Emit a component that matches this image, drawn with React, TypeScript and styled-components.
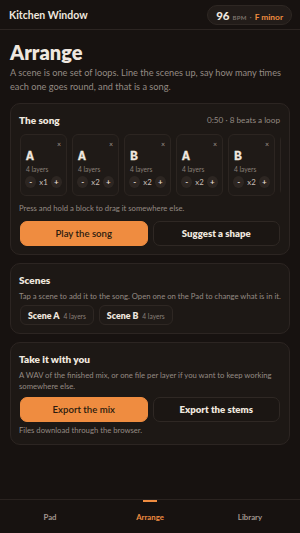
import React from 'react';
import styled, { createGlobalStyle } from 'styled-components';

const GlobalStyle = createGlobalStyle`
  html, body {
    margin: 0;
    padding: 0;
    background: #171210;
  }
  * { box-sizing: border-box; }
  body {
    font-family: Lato, "Noto Sans", sans-serif;
    color: #efe7df;
  }
`;

const Screen = styled.div`
  width: 300px;
  height: 533px;
  display: flex;
  flex-direction: column;
  background: #171210;
  overflow: hidden;
`;

const TopBar = styled.header`
  height: 30px;
  flex: none;
  display: flex;
  align-items: center;
  justify-content: space-between;
  padding: 0 8px 0 9px;
  border-bottom: 1px solid #2c2522;
`;

const AppName = styled.div`
  font-size: 10.5px;
  font-weight: 700;
`;

const TempoPill = styled.div`
  display: flex;
  align-items: baseline;
  gap: 3px;
  height: 20px;
  padding: 3px 8px 0 8px;
  border-radius: 10px;
  background: #221c19;
  border: 1px solid #2e2723;
`;

const Bpm = styled.span`
  font-size: 11.5px;
  font-weight: 900;
`;

const BpmUnit = styled.span`
  font-size: 6px;
  font-weight: 700;
  color: #7d736c;
  letter-spacing: 0.3px;
`;

const Dot = styled.span`
  font-size: 7px;
  color: #7d736c;
`;

const Key = styled.span`
  font-size: 8.4px;
  font-weight: 700;
  color: #ef8c40;
`;

const Body = styled.main`
  flex: 1;
  padding: 10px 10px 0 10px;
  display: flex;
  flex-direction: column;
`;

const Title = styled.h1`
  margin: 0;
  font-size: 20px;
  font-weight: 800;
  line-height: 24px;
`;

const Lead = styled.p`
  margin: 2px 0 10px 0;
  font-size: 9.2px;
  line-height: 13.5px;
  color: #948a83;
`;

const Card = styled.section`
  background: #1d1815;
  border: 1px solid #2c2522;
  border-radius: 10px;
  padding: 9px 8px 8px 8px;
  margin-bottom: 8px;
`;

const CardHead = styled.div`
  display: flex;
  align-items: center;
  justify-content: space-between;
  height: 14px;
  margin-bottom: 4px;
  padding-right: 1px;
`;

const CardTitle = styled.h2`
  margin: 0;
  font-size: 10px;
  font-weight: 800;
  line-height: 14px;
`;

const Meta = styled.span`
  font-size: 8.2px;
  line-height: 14px;
  color: #948a83;
`;

const Note = styled.p<{ $gap?: number }>`
  margin: ${p => p.$gap ?? 0}px 0 0 0;
  font-size: 7.7px;
  line-height: 10.5px;
  color: #948a83;
`;

const BlockStrip = styled.div`
  display: flex;
  gap: 5px;
  overflow: hidden;
  margin: 0 0 7px 1px;
  padding-top: 3px;
`;

const Block = styled.div`
  flex: none;
  width: 47px;
  height: 62px;
  border: 1px solid #2c2521;
  border-radius: 6px;
  background: #1f1a17;
  padding: 6px 4px 0 5px;
  display: flex;
  flex-direction: column;
`;

const Close = styled.span`
  align-self: flex-end;
  font-size: 7px;
  line-height: 7px;
  color: #a1968f;
  margin-right: 1px;
`;

const Letter = styled.div`
  font-family: "Liberation Mono", "DejaVu Sans Mono", monospace;
  font-size: 13px;
  font-weight: 700;
  line-height: 14px;
  margin-top: 2px;
  -webkit-text-stroke: 0.3px #efe7df;
`;

const Layers = styled.div`
  font-size: 6.6px;
  color: #8a8079;
  margin-top: 1px;
`;

const Counter = styled.div`
  display: flex;
  align-items: center;
  gap: 2px;
  margin-top: 3px;
  margin-left: -1px;
`;

const Round = styled.span`
  width: 12px;
  height: 12px;
  border-radius: 50%;
  background: #2d2622;
  display: flex;
  align-items: center;
  justify-content: center;
  font-size: 8px;
  font-weight: 700;
  color: #e4dcd4;
`;

const Times = styled.span`
  font-size: 7.8px;
  color: #c9bfb7;
  width: 11px;
  text-align: center;
`;

const ButtonRow = styled.div<{ $gap?: number }>`
  display: grid;
  grid-template-columns: 1fr 1fr;
  gap: 5px;
  margin: ${p => p.$gap ?? 7}px 1px 0 1px;
`;

const Button = styled.button<{ $primary?: boolean }>`
  height: 25px;
  border-radius: 7px;
  font-family: Lato, "Noto Sans", sans-serif;
  font-size: 9.6px;
  font-weight: ${p => (p.$primary ? 600 : 800)};
  color: ${p => (p.$primary ? '#2a1a0e' : '#efe7df')};
  background: ${p => (p.$primary ? '#ef8c40' : '#1b1613')};
  border: 1px solid ${p => (p.$primary ? '#ef8c40' : '#2f2824')};
`;

const Chips = styled.div`
  display: flex;
  gap: 5px;
  margin: 4px 0 0 1px;
`;

const Chip = styled.div`
  display: flex;
  align-items: baseline;
  gap: 4px;
  height: 20px;
  padding: 4px 7px 0 7px;
  border: 1px solid #2e2723;
  border-radius: 6px;
  background: #1f1a17;
`;

const ChipName = styled.span`
  font-size: 8.8px;
  font-weight: 800;
`;

const ChipMeta = styled.span`
  font-size: 6.6px;
  color: #8a8079;
`;

const Spacer = styled.div`
  flex: 1;
`;

const Nav = styled.nav`
  height: 34px;
  flex: none;
  display: grid;
  grid-template-columns: repeat(3, 1fr);
  border-top: 1px solid #2a2320;
  background: #171210;
`;

const NavItem = styled.div<{ $active?: boolean }>`
  position: relative;
  display: flex;
  justify-content: center;
  padding-top: 12px;
  font-size: 7.8px;
  font-weight: 700;
  color: ${p => (p.$active ? '#ef8c40' : '#a1968f')};

  &::before {
    content: '';
    display: ${p => (p.$active ? 'block' : 'none')};
    position: absolute;
    top: 0;
    left: 50%;
    width: 14px;
    height: 2px;
    margin-left: -7px;
    background: #ef8c40;
  }
`;

const blocks = [
  { name: 'A', times: 1 },
  { name: 'A', times: 2 },
  { name: 'B', times: 2 },
  { name: 'A', times: 2 },
  { name: 'B', times: 2 },
  { name: 'A', times: 1 },
];

const App: React.FC = () => (
  <Screen>
    <GlobalStyle />
    <TopBar>
      <AppName>Kitchen Window</AppName>
      <TempoPill>
        <Bpm>96</Bpm>
        <BpmUnit>BPM</BpmUnit>
        <Dot>·</Dot>
        <Key>F minor</Key>
      </TempoPill>
    </TopBar>

    <Body>
      <Title>Arrange</Title>
      <Lead>
        A scene is one set of loops. Line the scenes up, say how many times each one goes round, and
        that is a song.
      </Lead>

      <Card>
        <CardHead>
          <CardTitle>The song</CardTitle>
          <Meta>0:50 · 8 beats a loop</Meta>
        </CardHead>
        <BlockStrip>
          {blocks.map((b, i) => (
            <Block key={i}>
              <Close>×</Close>
              <Letter>{b.name}</Letter>
              <Layers>4 layers</Layers>
              <Counter>
                <Round>-</Round>
                <Times>x{b.times}</Times>
                <Round>+</Round>
              </Counter>
            </Block>
          ))}
        </BlockStrip>
        <Note>Press and hold a block to drag it somewhere else.</Note>
        <ButtonRow>
          <Button $primary>Play the song</Button>
          <Button>Suggest a shape</Button>
        </ButtonRow>
      </Card>

      <Card>
        <CardHead>
          <CardTitle>Scenes</CardTitle>
        </CardHead>
        <Note>Tap a scene to add it to the song. Open one on the Pad to change what is in it.</Note>
        <Chips>
          <Chip>
            <ChipName>Scene A</ChipName>
            <ChipMeta>4 layers</ChipMeta>
          </Chip>
          <Chip>
            <ChipName>Scene B</ChipName>
            <ChipMeta>4 layers</ChipMeta>
          </Chip>
        </Chips>
      </Card>

      <Card>
        <CardHead>
          <CardTitle>Take it with you</CardTitle>
        </CardHead>
        <Note>
          A WAV of the finished mix, or one file per layer if you want to keep working somewhere else.
        </Note>
        <ButtonRow $gap={6}>
          <Button $primary>Export the mix</Button>
          <Button>Export the stems</Button>
        </ButtonRow>
        <Note $gap={3}>Files download through the browser.</Note>
      </Card>
      <Spacer />
    </Body>

    <Nav>
      <NavItem>Pad</NavItem>
      <NavItem $active>Arrange</NavItem>
      <NavItem>Library</NavItem>
    </Nav>
  </Screen>
);

export default App;
